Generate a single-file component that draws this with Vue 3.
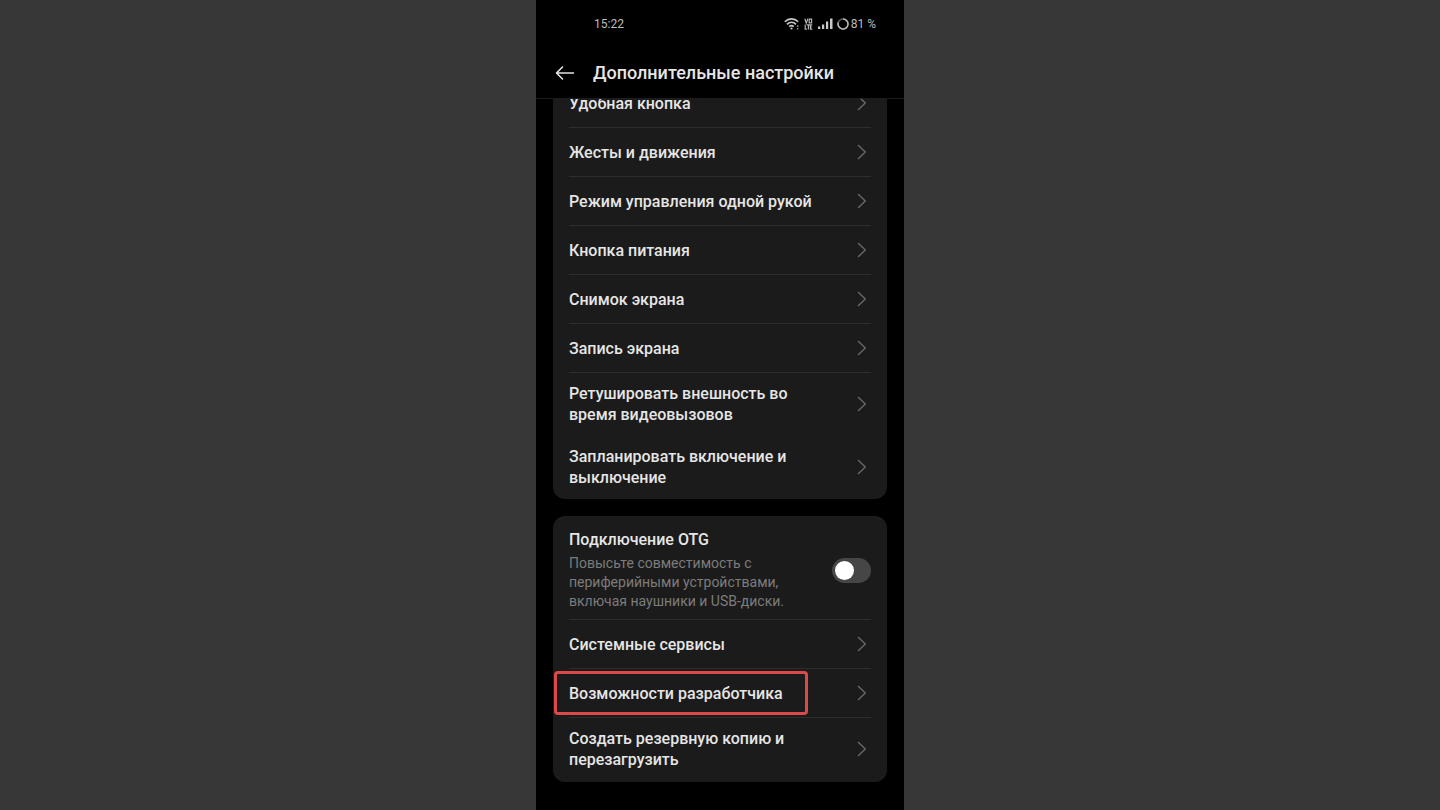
<script setup>
import { ref } from 'vue'

const otg = ref(false)

const general = [
  { lines: ['Удобная кнопка'] },
  { lines: ['Жесты и движения'] },
  { lines: ['Режим управления одной рукой'] },
  { lines: ['Кнопка питания'] },
  { lines: ['Снимок экрана'] },
  { lines: ['Запись экрана'] },
  { lines: ['Ретушировать внешность во', 'время видеовызовов'], plain: true },
  { lines: ['Запланировать включение и', 'выключение'] },
]

const system = [
  { lines: ['Системные сервисы'] },
  { lines: ['Возможности разработчика'], marked: true },
  { lines: ['Создать резервную копию и', 'перезагрузить'] },
]
</script>

<template>
  <div class="stage">
    <main class="phone">
      <header class="top">
        <div class="status">
          <time>15:22</time>
          <div class="indicators">
            <svg class="wifi" width="16" height="14" viewBox="0 0 16 14" fill="none" stroke="#c8c8c8" stroke-width="1.600">
              <path d="M.8 4.800C4.700.9 10.300.9 14.200 4.800M3 7.300c2.700-2.600 6.300-2.600 9 0M5.200 9.700c1.500-1.300 3.100-1.300 4.600 0" />
              <circle cx="7.500" cy="11.500" r="1.100" fill="#c8c8c8" stroke="none" />
              <path d="M13.700 8.200v1.700M13.700 10.900v1.700" stroke-width="1.500" stroke="#8c8c8c" />
            </svg>
            <svg class="volte" width="9" height="12" viewBox="0 0 9 12" fill="none" stroke="#b4b4b4" stroke-width="1.200">
              <path d="M.8.8l1.500 4.400L3.800.8M5.200 1.200h2.400v3.600H5.200zM1.200 6.500v4.700h1.700M2.800 6.800h3M4.400 6.800v4.700M8.300 6.800H6.400v4.400h1.900M6.400 9h1.700" />
            </svg>
            <svg class="signal" width="15" height="12" viewBox="0 0 15 12" fill="#c8c8c8">
              <path d="M0 8.500h2.200V11H0zM4 6.500h2.200V11H4zM8 3.500h2.200V11H8zM12 .5h2.500V11H12z" />
            </svg>
            <svg class="battery" width="12" height="12" viewBox="0 0 12 12" fill="none" stroke-width="1.500">
              <circle cx="6" cy="6" r="5" stroke="#5c5c5c" />
              <path d="M6 1a5 5 0 1 1-4.700 3.400" stroke="#b8b8b8" />
            </svg>
            <span>81 %</span>
          </div>
        </div>
        <div class="bar">
          <button class="back" type="button" aria-label="Назад">
            <svg width="20" height="16" viewBox="0 0 20 16" fill="none" stroke="#e4e4e4" stroke-width="1.600" stroke-linecap="round" stroke-linejoin="round">
              <path d="M18.500 8H1.500M7.500 2L1.500 8l6 6" />
            </svg>
          </button>
          <h1>Дополнительные настройки</h1>
        </div>
      </header>

      <div class="list">
        <section class="card">
          <button v-for="row in general" :key="row.lines[0]" type="button" class="row" :class="{ plain: row.plain }">
            <span class="label"><span v-for="line in row.lines" :key="line">{{ line }}</span></span>
            <svg class="chevron" width="10" height="16" viewBox="0 0 10 16"><path d="M1.500 1.500L8.300 8l-6.800 6.500" /></svg>
          </button>
        </section>

        <section class="card">
          <label class="row switch-row" for="otg">
            <span class="label">
              <span>Подключение OTG</span>
              <small>Повысьте совместимость с<br>периферийными устройствами,<br>включая наушники и USB-диски.</small>
            </span>
            <input id="otg" v-model="otg" type="checkbox" role="switch" class="switch">
          </label>
          <button v-for="row in system" :key="row.lines[0]" type="button" class="row" :class="{ marked: row.marked }">
            <span class="label"><span v-for="line in row.lines" :key="line">{{ line }}</span></span>
            <svg class="chevron" width="10" height="16" viewBox="0 0 10 16"><path d="M1.500 1.500L8.300 8l-6.800 6.500" /></svg>
          </button>
        </section>
      </div>
    </main>
  </div>
</template>

<style>
body {
  margin: 0;
  background: #373737;
}
</style>

<style scoped>
.stage {
  display: flex;
  justify-content: center;
  height: 100vh;
  background: #373737;
  font-family: Roboto, "Noto Sans", sans-serif;
  color: #e6e6e6;
}
.phone {
  box-sizing: border-box;
  display: flex;
  flex-direction: column;
  width: 100%;
  max-width: 368px;
  background: #000;
  overflow: hidden;
}
.top {
  flex: none;
  border-bottom: 1px solid #1c1c1c;
}
.status {
  display: flex;
  justify-content: space-between;
  align-items: center;
  height: 48px;
  padding: 0 28px 0 58px;
  font-size: 12px;
  color: #bcbcbc;
}
.indicators {
  display: flex;
  align-items: center;
}
.volte {
  margin: 0 5px 0 4px;
}
.battery {
  margin: 0 2px 0 4px;
}
.bar {
  display: flex;
  align-items: center;
  gap: 18px;
  height: 50px;
  padding: 0 19px;
}
.back {
  display: flex;
  padding: 0;
  border: 0;
  background: none;
}
h1 {
  margin: 0;
  font-size: 18px;
  line-height: 24px;
  font-weight: 500;
}
.list {
  flex: 1;
  min-height: 0;
  display: flex;
  flex-direction: column;
  justify-content: flex-end;
  gap: 17px;
  padding: 0 17px 28px;
  overflow: hidden;
}
.card {
  flex: none;
  padding: 0 16px;
  border-radius: 12px;
  background: #1b1b1b;
}
.card:last-child {
  padding-bottom: 1px;
}
.row {
  position: relative;
  box-sizing: border-box;
  display: flex;
  align-items: center;
  justify-content: space-between;
  width: 100%;
  min-height: 49px;
  padding: 10px 4px 10px 0;
  border: 0;
  border-bottom: 1px solid #2d2d2d;
  background: none;
  font: 500 16px/21px Roboto, "Noto Sans", sans-serif;
  color: #e6e6e6;
  text-align: left;
}
.row:last-child,
.row.plain {
  border-bottom-color: transparent;
}
.label,
.label > span {
  display: block;
}
.chevron {
  flex: none;
  fill: none;
  stroke: #666;
  stroke-width: 1.500;
  stroke-linecap: round;
  stroke-linejoin: round;
}
.row.switch-row {
  padding: 13px 0 8px;
}
small {
  display: block;
  margin-top: 4px;
  font-size: 14px;
  line-height: 19px;
  font-weight: 400;
  color: #7c7c7c;
}
.switch {
  appearance: none;
  box-sizing: border-box;
  flex: none;
  width: 39px;
  height: 25px;
  margin: 0;
  padding: 3px;
  border-radius: 13px;
  background: #464646;
}
.switch::before {
  content: "";
  display: block;
  width: 19px;
  height: 19px;
  border-radius: 50%;
  background: #fff;
}
.switch:checked::before {
  margin-left: auto;
}
.marked::after {
  content: "";
  position: absolute;
  inset: 2px 63px 2px -15px;
  border: 3px solid #dc494c;
  border-radius: 4px;
}
</style>
